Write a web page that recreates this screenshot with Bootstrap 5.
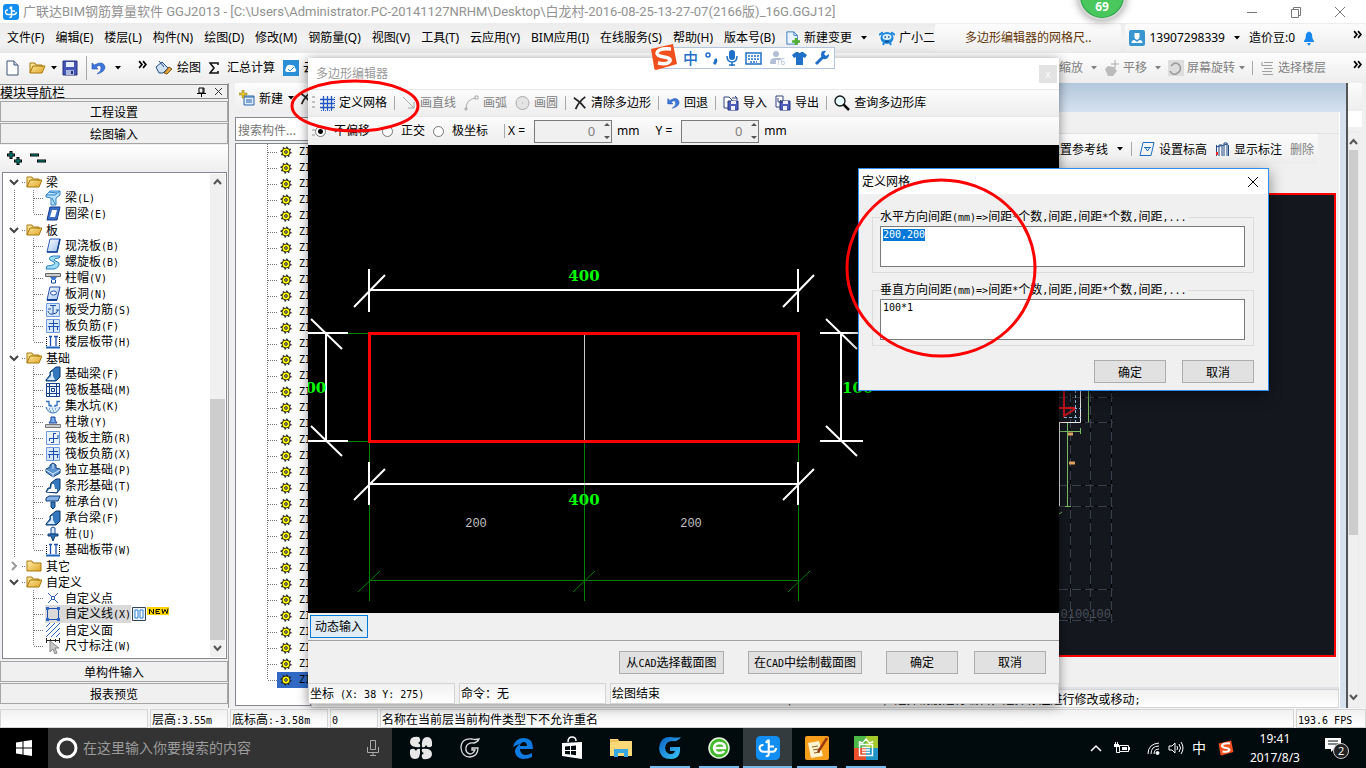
<!DOCTYPE html>
<html lang="zh-CN">
<head>
<meta charset="utf-8">
<meta name="viewport" content="width=device-width, initial-scale=1">
<title>广联达BIM钢筋算量软件 GGJ2013</title>
<link href="https://cdn.jsdelivr.net/npm/bootstrap@5.3.0/dist/css/bootstrap.min.css" rel="stylesheet">
<style>
:root{--ui:"Noto Sans","Noto Sans CJK SC",sans-serif;--song:"Noto Sans CJK SC",sans-serif;--face:#f0f0f0}
body{font-family:var(--ui);font-size:12px;line-height:16px;color:#000;background:var(--face);overflow:hidden}
button,input,textarea{font-family:inherit;font-size:12px;color:inherit}
svg{display:block;flex-shrink:0}
.shell{height:100vh}
.song{font-family:var(--song)}
.hw{font-family:"DejaVu Sans Mono",monospace;font-size:10px}
.plain{border:0;background:none;padding:0;color:inherit;white-space:nowrap;text-decoration:none}
.nowrap{white-space:nowrap}
.title-row{height:23px;background:#fff;color:#929292;padding-left:3px}
.app-name{font-family:Roboto,"Noto Sans CJK SC",sans-serif;font-size:13px}
.menu-row{height:30px;background:linear-gradient(#ececec,#f3f3f3 60%,#e8e8e8)}
.menu-row nav{gap:11px;padding-left:7px}
a.news.plain{color:#633405;padding:0 30px;line-height:28px;border-radius:3px}
.account{border-radius:3px;height:28px}
.soft,a.news.plain{background:linear-gradient(#fcfcfc,#ededed)}
.tool-row{height:30px;background:linear-gradient(#fdfdfd,#ededed)}
.tb{display:flex;align-items:center;gap:4px;padding:0 4px}
.tight .tb{gap:3px;padding:0 3px}
.sep{width:1px;height:14px;background:#a8a8a8;margin:0 3px;flex-shrink:0}
.sep.tall{height:24px}
.grip{width:3px;height:14px;background:repeating-linear-gradient(#c0c0c0 0 2px,transparent 2px 5px);flex-shrink:0}
.muted{color:#808080}
/* left navigator */
.navigator{width:229px;flex-shrink:0;border-right:1px solid #9a9a9a;padding:1px 0 3px}
.nav-head{height:15px;border:1px solid #888;border-left:0;font-size:13px;margin-bottom:2px}
.bar-btn{height:21px;border:1px solid #a6a6a6;background:var(--face);line-height:18px;padding:0;width:100%;margin-bottom:1px}
.pm-row{height:26px;background:linear-gradient(#fff,#eee);padding-left:7px}
.tree-box{border:1px solid #828790;margin:1px 1px 2px 2px;background:#fff;padding:1px}
.tree-row{height:16px}
.tree-row .pick{background:#d9d9d9}
.tree-row svg.ic{width:16px;height:16px}
.vscroll{width:15px;background:var(--face)}
.thumb{background:#cdcdcd}
/* component list */
.parts{width:76px;flex-shrink:0;margin-left:6px}
.find{height:24px;width:100%;border:1px solid #828790;padding:0 2px;background:#fff;color:#777;border-radius:0;margin:4px 0 2px}
.part-box{border:1px solid #828790;background:#fff;overflow:hidden;margin-bottom:2px}
.part-row{height:16px;padding-left:31px}
.part-row.on .pad{background:#316ac5}
.pad{gap:7px;padding-left:3px}
/* model area */
.mdi{background:linear-gradient(#b3c7dc,#d6e2f0 29px,#d6e2f0);padding:29px 6px 0 0}
.mdi-in{background:var(--face);border-right:1px solid #fff}
.mdi-head{height:22px}
.mdi-tools{height:30px;width:fit-content;margin-left:auto;margin-right:21px}
.mdi-gap{height:29px}
.mdi-foot{height:32px}
.mdi-status{height:19px}
.model{background:#14171e;border:2px solid #f00;margin-right:3px}
.rail{width:20px;flex-shrink:0;border-left:2px solid #555;padding-right:4px}
/* status */
.status{height:20px;background:#f6f6f6;gap:2px;padding-top:1px}
.cell{border:1px solid #d4d4d4;background:linear-gradient(#f1f1f1,#fff);padding:0 1px;line-height:17px;white-space:nowrap;overflow:hidden}
.mdi-status.cell{padding-left:474px}
.w-a{width:148px}.w-b{width:78px}.w-c{width:98px}.w-d{width:48px}.w-e{width:70px}
/* task bar */
.taskbar{height:40px;background:#010a0d;color:#fff}
.start{width:48px;background:#000}
.search{width:344px;background:#333;color:#9a9a9a;gap:5px;padding:0 12px 0 8px}
.search input{background:none;border:0;outline:0;font-size:14px;padding:0;color:#aaa}
.search input::placeholder{color:#9b9b9b}
.task{width:49px;border:0;background:none;padding:0;display:flex;align-items:center;justify-content:center}
.task.run{background:linear-gradient(#76b9ed,#76b9ed) center bottom/40px 2px no-repeat}
.task.now{background:#333b3e;box-shadow:inset 0 -2px #76b9ed}
.ime-mode{font-size:14px}
.clock{line-height:19px}
/* floating windows */
.editor{position:absolute;left:308px;right:307px;top:58px;bottom:64px;background:var(--face);box-shadow:0 2px 10px rgba(0,0,0,.45)}
.ed-title{height:31px;background:#fff;color:#999;padding:0 2px 0 8px}
.ed-close{width:18px;height:18px;background:#e3e3e3;color:#fff;font-size:10px}
.ed-t1{height:27px;border-top:1px solid #e8e8e8;padding-left:4px}
.ed-t2{height:29px;border-top:1px solid #e8e8e8;padding-left:4px}
.ed-t2 input[type=radio]{appearance:none;width:11px;height:11px;border:1px solid #777;border-radius:50%;margin:0 8px 0 0;background:#fff}
.ed-t2 input[type=radio]:checked{background:radial-gradient(#000 0 2px,#fff 3px)}
.spin{width:78px;height:23px;border:1px solid #7a7a7a;background:var(--face);margin:0 5px 0 9px}
.spin input{width:60px;border:0;background:none;text-align:right;color:#808080;padding:0;font-size:13px}
.board{background:#000;overflow:hidden}
.big-num{font-family:"DejaVu Serif",serif;font-size:15px;font-weight:700}
.thin-num{font-family:"Liberation Mono",monospace;font-size:12px}
.dyn-row{height:28px;padding-left:2px;border-bottom:1px solid #a0a0a0}
.dyn{height:23px;border:1px solid #0078d7;background:#e0ecf6;padding:0 4px}
.act-row{height:42px;padding-right:13px}
.act{height:23px;border:1px solid #adadad;background:#e1e1e1;padding:0 5px;line-height:20px;white-space:nowrap;min-width:105px}
.act.std{width:72px;min-width:0}
.ed-status{height:21px}
.w-pos{width:147px}
.dlg{position:absolute;right:97px;top:168px;width:411px;background:var(--face);border:1px solid #2e8ef0;box-shadow:0 4px 14px rgba(0,0,0,.45)}
.dlg-title{height:25px;background:#fff;padding:0 9px 0 3px}
.dlg-body{padding:16px 14px 7px 13px}
.dlg fieldset{border:1px solid #dcdcdc;padding:2px 8px 5px 7px;margin-bottom:10px}
.dlg legend{float:none;width:auto;margin:0;padding:0 2px 0 0;font-size:12px;line-height:12px}
.dlg textarea{display:block;width:100%;height:41px;border:1px solid #7a7a7a;border-radius:0;resize:none;padding:2px;outline:0;background:#fff;font-family:"DejaVu Sans Mono",monospace;font-size:10px;line-height:12px}
.dlg textarea::selection{background:#0078d7;color:#fff}
.ring{position:absolute;pointer-events:none}
.ring-a{left:288px;top:78px}
.ring-b{left:-15px;top:9px}
.ime{position:absolute;left:650px;top:43px}
.ime-bar{margin:4px 0 0 10px;height:22px;width:175px;border:1px solid #b4c6dc;background:#fff;padding:0 4px 0 22px;color:#1e70c8;gap:5px}
.ime-bar b{font-size:15px;font-weight:500}
.ime-s{position:absolute;left:0;top:0}
.ball{position:absolute;right:240px;top:-28px;width:48px;height:48px;border-radius:50%;background:#49c75c;border:2px solid #d6d6d6;box-shadow:0 1px 8px rgba(0,0,0,.4),inset 0 0 0 1px #279a48;color:#fff;font-weight:700;font-size:12px;padding-top:25px;text-align:center}
</style>
</head>
<body>
<svg width="0" height="0" class="position-absolute" aria-hidden="true">
<defs>
<linearGradient id="gy" x2="1" y2="1"><stop stop-color="#fff0a8"/><stop offset="1" stop-color="#e0a528"/></linearGradient>
<linearGradient id="gb" x2="1" y2="1"><stop stop-color="#fff"/><stop offset="1" stop-color="#9cc0ee"/></linearGradient>
<linearGradient id="gg" x2="1" y2="1"><stop stop-color="#0a5fc4"/><stop offset="1" stop-color="#3cc8f8"/></linearGradient>
<symbol id="i-app" viewBox="0 0 16 16"><rect width="16" height="16" rx="3" fill="#128ef2"/><path d="M8.500 2.500V12q0 1.500-2 1.500M6.500 4.500l2-2M5 6Q2 6 2.500 8.500 3 10.500 5 10.500h6q2 0 2.500-2.500M8.500 7h3.500" fill="none" stroke="#fff" stroke-width="1.400"/></symbol>
<symbol id="i-folder" viewBox="0 0 16 16"><path d="M1 13V3h5l1 2h6v2M1 13l3-7h12l-3 7z" fill="url(#gy)" stroke="#a8790c"/></symbol>
<symbol id="i-folderc" viewBox="0 0 16 16"><path d="M1 13V3h5l1 2h8v8z" fill="url(#gy)" stroke="#a8790c"/></symbol>
<symbol id="i-beam" viewBox="0 0 16 16"><path d="M1 5l4-4h10v4l-4 3v7H6V8L1 7z" fill="#b9e0fb" stroke="#2f83c8"/><path d="M1 5h9l5-4M4 2l8 1M7 8l3 6" stroke="#2f83c8" fill="none"/></symbol>
<symbol id="i-slab" viewBox="0 0 16 16"><path d="M5 1h10l-3 13H2z" fill="url(#gb)" stroke="#2b5dbb"/><path d="M2 14h10l3-13" stroke="#164094" stroke-width="1.500" fill="none"/></symbol>
<symbol id="i-ringbeam" viewBox="0 0 16 16"><path d="M5 1h10l-3 13H2z" fill="#3b6ec8" stroke="#123b90"/><path d="M7 4h5l-2 7H5z" fill="#fff"/></symbol>
<symbol id="i-spiral" viewBox="0 0 16 16"><path d="M15 2H8Q3 3 5 6l4 2q3 3-7 4l-1 3h8q6-2 5-6L9 6q0-2 5-2z" fill="#9edcf8" stroke="#2381c0"/></symbol>
<symbol id="i-cap" viewBox="0 0 16 16"><path d="M.5 3.500h15v3H.5z" fill="#ccc" stroke="#666"/><path d="M5 7h7l-2 3H7z" fill="#3974d8"/><path d="M6.500 10v3h4v-3" fill="none" stroke="#1a49a0"/></symbol>
<symbol id="i-hole" viewBox="0 0 16 16"><path d="M5 1h10l-3 13H2z" fill="url(#gb)" stroke="#1e4ca8"/><ellipse cx="8.500" cy="7" rx="3" ry="2" fill="#fff" stroke="#1e4ca8"/><path d="M2 14h10" stroke="#164094" stroke-width="2"/></symbol>
<symbol id="i-rebar" viewBox="0 0 16 16"><path d="M1.500 1.500h13v13h-13z" fill="#d8e8fb" stroke="#6f9be0"/><path d="M8 3v9M5 3.500h6M3 7h3M3 9q1 4 5 3 4 0 5-4M11 8h3" fill="none" stroke="#1c4fae"/></symbol>
<symbol id="i-rebar2" viewBox="0 0 16 16"><path d="M1.500 1.500h13v13h-13z" fill="#d8e8fb" stroke="#6f9be0"/><path d="M8.500 2v12M3 8.500h11M4 5.500h9M4.500 8v4M12.500 8v4" fill="none" stroke="#1c4fae"/></symbol>
<symbol id="i-strip" viewBox="0 0 16 16"><path d="M1 13.500h14" stroke="#1c63c0" stroke-width="2"/><path d="M4 2.500h3M9 2.500h4M5.500 3v9M11 3v9" stroke="#1c4fae" stroke-width="1.300"/><path d="M1.500 3v9M14.500 3v9" stroke="#111" stroke-dasharray="1 1"/></symbol>
<symbol id="i-fbeam" viewBox="0 0 16 16"><path d="M1 14l4-5V6l6-5h4v10l-4 4H1z" fill="#3378bd" stroke="#0b3566"/><path d="M2 14l4-4V6h2v4l2 4z" fill="#d5e9fa"/></symbol>
<symbol id="i-raft" viewBox="0 0 16 16"><path d="M1.500 1.500h13v13h-13z" fill="#eef5ff" stroke="#133f8c"/><path d="M4.500 2v12M11.500 2v12M2 4.500h12M2 11.500h12M6.500 6.500h3v3h-3z" stroke="#133f8c" fill="none"/></symbol>
<symbol id="i-pit" viewBox="0 0 16 16"><path d="M1 3.500h3v4h2v2h4v-2h2v-4h3" fill="none" stroke="#2f6fc0" stroke-width="1.300"/><path d="M1 9q2 6 7 6t7-6" fill="#dcebfb" stroke="#2f6fc0"/><path d="M4 11h9M5 13h6" stroke="#2f6fc0" stroke-dasharray="1 2"/></symbol>
<symbol id="i-pier" viewBox="0 0 16 16"><path d="M6 3h4v3l2 3H4l2-3z" fill="#79aaf0" stroke="#174396"/><path d="M.5 10.500h15v3H.5z" fill="#ccc" stroke="#777"/></symbol>
<symbol id="i-rc" viewBox="0 0 16 16"><path d="M1.500 1.500h13v13h-13z" fill="#e9f1fd" stroke="#6f9be0"/><path d="M8.500 3v10M4 8.500h9V5M4.500 8v3M8 3.500h3M6 12.500h3" fill="none" stroke="#1c4fae"/></symbol>
<symbol id="i-iso" viewBox="0 0 16 16"><path d="M1 7l4-2V3l3-2 3 2v3l4 1v4l-7 4-7-5z" fill="#5b93cf" stroke="#0f3d76"/><path d="M1 8l7 4 7-4M8 12v3M8 2v5" stroke="#dceaff" fill="none"/></symbol>
<symbol id="i-stripf" viewBox="0 0 16 16"><path d="M1 14l2-4h2l1-5 5-4h4v10l-3 4z" fill="#3378bd" stroke="#0b3566"/><path d="M2 14l2-3h2l1-5h2l1 5h2v3z" fill="#fff"/></symbol>
<symbol id="i-pcap" viewBox="0 0 16 16"><path d="M1 4l3-2h11l-2 5H1z" fill="#84b2e8" stroke="#0f3d76"/><path d="M6 8h4v5l-2 2-2-2z" fill="#3378bd" stroke="#0f3d76"/></symbol>
<symbol id="i-pile" viewBox="0 0 16 16"><path d="M6 2q2-2 4 0v6H6z" fill="#dbe9fa" stroke="#174b90"/><path d="M3 8h10v2H10l-2 5-2-5H3z" fill="#2f6fb8" stroke="#0f3d76"/></symbol>
<symbol id="i-pt" viewBox="0 0 16 16"><path d="M3 3l10 10M13 3L3 13" stroke="#2d5fb0"/><path d="M6.500 6.500h3v3h-3z" fill="#fff" stroke="#2d5fb0"/></symbol>
<symbol id="i-line" viewBox="0 0 16 16"><path d="M2.500 2.500h11v11h-11z" fill="none" stroke="#1c4fae"/><path d="M1 1h3v3H1zM12 1h3v3h-3zM1 12h3v3H1zM12 12h3v3h-3z" fill="#2d68c8"/></symbol>
<symbol id="i-hatch" viewBox="0 0 16 16"><path d="M1 5l4-4M1 10l9-9M1 15L15 1M6 15l9-9M11 15l4-4" stroke="#2d68c8"/></symbol>
<symbol id="i-dim" viewBox="0 0 16 16"><path d="M1.500 0v5M14.500 0v5M1 2.500h14M5.500 1v3M10.500 1v3" stroke="#222"/><path d="M5 3v11l3-3 2 5 2-1-2-5h4z" fill="#c9c9c9" stroke="#888"/></symbol>
<symbol id="i-gear" viewBox="0 0 12 12"><circle cx="6" cy="6" r="4" fill="#ff0" stroke="#111" stroke-width=".8"/><circle cx="6" cy="6" r="4.800" fill="none" stroke="#222" stroke-width="1.400" stroke-dasharray="1.700 2"/><circle cx="6" cy="6" r="1.300" fill="#fff" stroke="#111"/></symbol>
<symbol id="i-down" viewBox="0 0 8 8"><path d="M1 2h6L4 5.500z" fill="currentColor"/></symbol>
<symbol id="i-more" viewBox="0 0 8 8"><path d="M1 1l2.500 3L1 7M4.500 1L7 4 4.500 7" fill="none" stroke="#000" stroke-width="1.500"/></symbol>
<symbol id="i-undo" viewBox="0 0 16 16"><path d="M2 3v6h6L6 7q4-3 5 0 1 4-4 7 8-2 8-7Q13 0 4.500 5z" fill="#3d77dd" stroke="#1e50a8" stroke-width=".6"/></symbol>
<symbol id="i-doc" viewBox="0 0 16 16"><path d="M3 1h7l4 4v10H3z" fill="#fff" stroke="#3c5578"/><path d="M10 1v4h4" fill="#c8dcf4" stroke="#3c5578"/></symbol>
<symbol id="i-docplus" viewBox="0 0 16 16"><path d="M1 1h8l4 4v10H1z" fill="#eaf4ff" stroke="#2b71b8"/><path d="M9 1v4h4" fill="none" stroke="#2b71b8"/><path d="M10 8h3v2.500h3v3h-3V16h-3v-2.500H7v-3h3z" fill="#4fae2e"/></symbol>
<symbol id="i-save" viewBox="0 0 16 16"><path d="M1 1h14v14H1z" fill="#4556b8" stroke="#26307c"/><path d="M4 2h8v5H4z" fill="#e8eefc"/><path d="M4 10h8v5H4z" fill="#aab6da"/><path d="M9 11h2v3H9z" fill="#26307c"/></symbol>
<symbol id="i-x" viewBox="0 0 16 16"><path d="M1 2q8 5 13 12M14 1Q6 7 3 15" fill="none" stroke="#222" stroke-width="2"/></symbol>
<symbol id="i-grid" viewBox="0 0 16 16"><path d="M4.500 1v14M8.500 1v14M12.500 1v14M1 4.500h14M1 8.500h14M1 12.500h14" stroke="#1f56c4" stroke-width="1.300"/><path d="M15.500 2v12M2 15.500h12" stroke="#2762c8" stroke-dasharray="1 1"/></symbol>
<symbol id="i-io" viewBox="0 0 16 16"><path d="M1 2h5l3 3v8H1z" fill="#fff" stroke="#31437a"/><path d="M5 6h10v9H5z" fill="#4c5dbd" stroke="#26307c"/><path d="M8 6h5v3H8zM8 11h4v4H8z" fill="#eef"/><path d="M9 3h5l-2-2M14 3v2" stroke="#31437a" fill="none"/></symbol>
<symbol id="i-out" viewBox="0 0 16 16"><path d="M1 1h7v11H1z" fill="#fff" stroke="#31437a"/><path d="M5 6h10v9H5z" fill="#4c5dbd" stroke="#26307c"/><path d="M8 6h5v3H8zM8 11h4v4H8z" fill="#eef"/><path d="M3 3v4h4L5 5M7 7L5 9" stroke="#31437a" fill="none"/></symbol>
<symbol id="i-mag" viewBox="0 0 16 16"><circle cx="6" cy="6" r="5" fill="#e8fbff" stroke="#111" stroke-width="1.300"/><path d="M9.500 9.500L15 15" stroke="#111" stroke-width="2.500"/></symbol>
<symbol id="i-g" viewBox="0 0 24 24"><path d="M23 1Q20 6 14 5 8 5 7 12q1 6 6 6 3 0 4-3h-5v-4h10q1 12-9 12Q2 23 1 13 2 0 13 1q6 1 10 0z" fill="url(#gg)"/></symbol>
<symbol id="i-s" viewBox="0 0 28 28"><path d="M1 6L23 1l4 20-21 6q-2 0-2-3z" fill="#f0501e"/><path d="M21 6Q8 5 7 10q0 3 7 4t6 4q-2 4-12 2" fill="none" stroke="#fff" stroke-width="3.500"/></symbol>
</defs>
</svg>

<div class="shell d-flex flex-column position-relative">
  <header>
    <div class="title-row d-flex align-items-center">
      <svg width="16" height="16"><use href="#i-app"/></svg>
      <span class="nowrap ms-1 app-name">广联达BIM钢筋算量软件 GGJ2013 - [C:\Users\Administrator.PC-20141127NRHM\Desktop\白龙村-2016-08-25-13-27-07(2166版)_16G.GGJ12]</span>
      <div class="ms-auto d-flex gap-4 pe-3 me-1">
        <button class="plain me-2" aria-label="最小化"><svg width="12" height="12"><path d="M1 6.500h10" stroke="#777"/></svg></button>
        <button class="plain me-2" aria-label="还原"><svg width="12" height="12" fill="none" stroke="#777"><path d="M1.500 3.500h7v8h-7zM3.500 3V1.500h7v8H9"/></svg></button>
        <button class="plain" aria-label="关闭"><svg width="12" height="12" stroke="#777"><path d="M1 1l10 10M11 1L1 11"/></svg></button>
      </div>
    </div>
    <div class="menu-row d-flex align-items-center">
      <nav class="d-flex align-items-center">
        <a class="plain" href="#">文件(F)</a><a class="plain" href="#">编辑(E)</a><a class="plain" href="#">楼层(L)</a><a class="plain" href="#">构件(N)</a><a class="plain" href="#">绘图(D)</a><a class="plain" href="#">修改(M)</a><a class="plain" href="#">钢筋量(Q)</a><a class="plain" href="#">视图(V)</a><a class="plain" href="#">工具(T)</a><a class="plain" href="#">云应用(Y)</a><a class="plain" href="#">BIM应用(I)</a><a class="plain" href="#">在线服务(S)</a><a class="plain" href="#">帮助(H)</a><a class="plain" href="#">版本号(B)</a>
        <button class="plain d-flex align-items-center gap-1"><svg width="14" height="16"><use href="#i-docplus"/></svg>新建变更<svg class="ms-1" width="8" height="8"><use href="#i-down"/></svg></button>
        <button class="plain d-flex align-items-center gap-1"><svg width="16" height="16"><ellipse cx="8" cy="8" rx="6.500" ry="6" fill="#1c86dc"/><path d="M0 5l3-2 2 3M16 5l-3-2-2 3M5 13l-1 2M11 13l1 2" stroke="#1c86dc" stroke-width="2" fill="none"/><ellipse cx="8" cy="7" rx="4.500" ry="3" fill="#d8efff"/><path d="M5.500 7h1.500M9 7h1.500M6 11.500h4" stroke="#124a86" stroke-width="1.500"/></svg>广小二</button>
      </nav>
      <a class="plain news" href="#">多边形编辑器的网格尺..</a>
      <div class="account soft d-flex align-items-center flex-fill ms-1">
        <button class="plain tb"><svg width="16" height="16"><rect width="16" height="16" rx="2" fill="#3796cf"/><path d="M5.500 3h5v4q0 2-2.500 3-2.500-1-2.500-3z" fill="#fff"/><path d="M2.500 13q0-3 3-3l2.500 2 2.500-2q3 0 3 3z" fill="#fff"/></svg>13907298339<svg class="ms-1" width="8" height="8"><use href="#i-down"/></svg></button>
        <button class="plain tb">造价豆:0<svg class="ms-1" width="12" height="16"><path d="M1 11q2-2 2-7 3-5 6 0 0 5 2 7v1H1z" fill="#1887ee"/><path d="M4 13h4l-2 3z" fill="#1887ee"/></svg></button>
        <button class="plain ms-auto me-1" aria-label="更多"><svg class="mb-2" width="9" height="9"><use href="#i-more"/></svg></button>
      </div>
    </div>
    <div class="tool-row d-flex align-items-center">
      <button class="plain ms-1" aria-label="新建"><svg width="16" height="16"><use href="#i-doc"/></svg></button>
      <button class="plain d-flex align-items-center gap-1 ms-2" aria-label="打开"><svg width="18" height="16"><use href="#i-folder"/></svg><svg width="8" height="8"><use href="#i-down"/></svg></button>
      <button class="plain ms-1" aria-label="保存"><svg width="16" height="16"><use href="#i-save"/></svg></button>
      <span class="sep tall ms-2"></span>
      <button class="plain d-flex align-items-center gap-1" aria-label="撤销"><svg width="16" height="16"><use href="#i-undo"/></svg><svg class="ms-1" width="8" height="8"><use href="#i-down"/></svg></button>
      <button class="plain ms-3 me-1" aria-label="更多"><svg class="mb-2" width="9" height="9"><use href="#i-more"/></svg></button>
      <button class="plain tb"><svg width="18" height="16"><path d="M1 7l6-5 6 6-5 5H4z" fill="#cfe0f5" stroke="#234d84"/><path d="M4 1l5 6" stroke="#234d84"/><path d="M9 13l5-6 3 2-5 5z" fill="#e3a43a" stroke="#7b551a"/></svg>绘图</button>
      <button class="plain tb"><svg class="me-1" width="10" height="12"><path d="M9 3V1H1l4 5-4 5h8V9" fill="none" stroke="#111" stroke-width="1.600"/></svg>汇总计算</button>
      <button class="plain tb"><svg width="16" height="16"><rect width="16" height="16" fill="#2b8fd8"/><path d="M4 12q-3-1-1-4 1-4 5-3 4 0 4 3 3 3-1 4z" fill="#fff"/><path d="M5 9l2 2 4-4" stroke="#2b8fd8" fill="none"/></svg>云检查</button>
      <div class="tight ms-auto d-flex align-items-center muted">
        <button class="plain tb">缩放<svg class="ms-1" width="8" height="8"><use href="#i-down"/></svg></button>
        <button class="plain tb"><svg width="16" height="16"><path d="M1 9l3-3 6 1 3 4-4 5H4z" fill="#bbb"/><path d="M11 0v8M7 4h8" stroke="#aaa"/></svg>平移<svg class="ms-1" width="8" height="8"><use href="#i-down"/></svg></button>
        <button class="plain tb"><svg width="16" height="16"><path d="M0 0h16v16H0z" fill="#ddd"/><path d="M3 6q5-6 9 0 2 5-4 8M2 11q2 4 6 3" fill="none" stroke="#999" stroke-width="1.500"/></svg>屏幕旋转<svg width="8" height="8"><use href="#i-down"/></svg></button>
        <span class="sep"></span>
        <button class="plain tb"><svg width="16" height="16"><path d="M5 2.500h9M3 5.500h10M5 8.500h9M3 11.500h10M4 14.500h10M3 2v4" fill="none" stroke="#a0a0a0"/></svg>选择楼层</button>
        <button class="plain ms-4 me-1" aria-label="更多"><svg class="mb-2" width="9" height="9"><use href="#i-more"/></svg></button>
      </div>
    </div>
  </header>

  <main class="d-flex flex-fill overflow-hidden song">
    <aside class="navigator d-flex flex-column">
      <div class="nav-head d-flex align-items-center flex-shrink-0"><span class="nowrap">模块导航栏</span>
        <svg class="ms-auto me-2" width="9" height="10"><path d="M2 1h5v5H2zM0 6.500h9M4.500 7v3M6 1v5" fill="none" stroke="#000"/></svg>
        <svg class="me-1" width="9" height="9" stroke="#333"><path d="M1 1l7 7M8 1L1 8"/></svg></div>
      <button class="bar-btn flex-shrink-0">工程设置</button>
      <button class="bar-btn flex-shrink-0">绘图输入</button>
      <div class="pm-row d-flex align-items-center flex-shrink-0"><svg width="40" height="16"><path d="M4 1v8M0 5h8M11 7v8M7 11h8M23 5h9M30 11h9" stroke="#000" stroke-width="3"/><path d="M4 2v6M1 5h6M11 8v6M8 11h6M24 5h7M31 11h7" stroke="#009c90"/></svg></div>
      <div class="tree-box flex-fill d-flex overflow-hidden">
        <div class="flex-fill" id="tree"></div>
        <div class="vscroll d-flex flex-column">
          <svg width="15" height="18" fill="none" stroke="#555" stroke-width="2"><path d="M4 10l3.500-4L11 10"/></svg>
          <div class="flex-fill"></div><div class="thumb" style="height:50%"></div>
          <svg width="15" height="17" fill="none" stroke="#555" stroke-width="2"><path d="M4 6l3.500 4L11 6"/></svg>
        </div>
      </div>
      <button class="bar-btn flex-shrink-0">单构件输入</button>
      <button class="bar-btn flex-shrink-0">报表预览</button>
    </aside>

    <section class="parts d-flex flex-column">
      <div class="tool-row d-flex align-items-center flex-shrink-0"><button class="plain tb"><svg width="16" height="16"><path d="M5 6h10v9H5z" fill="#dcebfb" stroke="#2c64a8"/><path d="M5 7h10M7 10h6M7 12h6" stroke="#2c64a8"/><path d="M3 0h2v3h3v2H5v3H3V5H0V3h3z" fill="#e9c62b" stroke="#8b7310" stroke-width=".5"/></svg>新建<svg width="8" height="8"><use href="#i-down"/></svg></button><svg width="14" height="14"><use href="#i-x"/></svg></div>
      <input class="find flex-shrink-0" type="text" placeholder="搜索构件..." aria-label="搜索构件">
      <div class="part-box flex-fill" id="parts"></div>
    </section>

    <section class="mdi flex-fill d-flex overflow-hidden">
      <div class="mdi-in flex-fill d-flex flex-column">
        <div class="mdi-head border-bottom flex-shrink-0"></div>
        <div class="mdi-tools soft d-flex align-items-center flex-shrink-0">
          <button class="plain tb">设置参考线<svg class="ms-1" width="8" height="8"><use href="#i-down"/></svg></button><span class="sep"></span>
          <button class="plain tb"><svg width="16" height="16" fill="none" stroke="#1c6fc0"><path d="M4 1.500h11l-3 13H1zM5 6.500h7M6.500 7l2 3 2-3"/></svg>设置标高</button>
          <button class="plain tb"><svg width="15" height="16" fill="none" stroke="#234d84"><path d="M1.500 4v11M13.500 4v11M4 15V4h3v11M9 15V2h3v13M1 6l12-3"/><path d="M2 11v3" stroke="#e22" stroke-width="2"/></svg>显示标注</button>
          <button class="plain tb muted">删除</button>
        </div>
        <div class="mdi-gap flex-shrink-0"></div>
        <div class="model flex-fill d-flex justify-content-end overflow-hidden">
          <svg width="275" height="458" viewBox="1059 195 275 458" fill="none">
            <path d="M1059 397.500h54M1059 422.500h54M1059 485.500h54M1059 506.500h54M1059 589.500h54M1059 620.500h54M1070.500 380v243M1090.500 380v243M1111.500 380v243" stroke="#000"/>
            <path d="M1059 397.500h54M1059 422.500h54M1059 485.500h54M1059 506.500h54M1059 589.500h54M1059 620.500h54M1070.500 380v243M1090.500 380v243M1111.500 380v243" stroke="#39404b" stroke-dasharray="9 4"/>
            <path d="M1088.500 380v42M1067.500 422v84M1059 431.500h22M1080.500 428v6M1065 506.500h6M1059 514l3-2" stroke="#78bd5e"/>
            <path d="M1059.500 422v84M1059 422.500h21.500V380" stroke="#e8e8e8"/>
            <path d="M1075.500 390v32M1064 408.500h17M1064 417.500h17" stroke="#90b8df" stroke-dasharray="3 2"/>
            <path d="M1064 380v36l11-7M1059 408h16" stroke="#c8141c" stroke-width="2"/>
            <path d="M1068 434h5M1069 463h6" stroke="#d9a25f" stroke-width="3"/>
            <text class="thin-num" x="1111" y="618" text-anchor="end" fill="#4a505a">0100100</text>
          </svg>
        </div>
        <div class="mdi-foot flex-shrink-0 border-bottom border-2"></div>
        <div class="mdi-status cell flex-shrink-0">(X: 7054 Y: 1183) 选择钢筋进行编辑，选择标注进行修改或移动;</div>
      </div>
    </section>
    <aside class="rail d-flex flex-column">
      <div class="soft pt-4 pb-1"></div><div class="bg-white mb-1 py-2"></div>
      <div class="vscroll flex-fill d-flex flex-column border border-secondary-subtle w-75">
        <svg width="10" height="18" fill="none" stroke="#555" stroke-width="2"><path d="M1 12l3.500-4L8 12"/></svg>
        <div class="thumb" style="height:67%"></div><div class="flex-fill"></div>
        <svg width="10" height="18" fill="none" stroke="#555" stroke-width="2"><path d="M1 6l3.500 4L8 6"/></svg>
      </div>
    </aside>
  </main>

  <footer>
    <div class="status d-flex song">
      <div class="cell w-a"></div><div class="cell w-b">层高:3.55m</div><div class="cell w-c">底标高:-3.58m</div><div class="cell w-d">0</div><div class="cell flex-fill">名称在当前层当前构件类型下不允许重名</div><div class="cell w-e">193.6 FPS</div>
    </div>
    <div class="taskbar d-flex">
      <button class="plain start d-flex align-items-center justify-content-center" aria-label="开始"><svg width="16" height="16" fill="#fff"><path d="M0 2.500l6.500-1V7.500H0zM7.500 1.300L16 0v7.500H7.500zM0 8.500h6.500v6L0 13.500zM7.500 8.500H16V16l-8.500-1.300z"/></svg></button>
      <div class="search d-flex align-items-center"><svg width="22" height="22"><circle cx="11" cy="11" r="9" fill="none" stroke="#fff" stroke-width="3"/></svg><input class="flex-fill" type="text" placeholder="在这里输入你要搜索的内容" aria-label="搜索"><svg width="14" height="18" fill="none" stroke="#aaa"><path d="M4.500 1.500h5v9h-5zM1.500 8v5.500h11V8M7 14v3M4 16.500h6"/></svg></div>
      <div class="d-flex ms-1">
        <button class="task" aria-label="花瓣"><svg width="24" height="24" viewBox="0 0 24 24" fill="#e8e8e8"><path d="M11 11Q1 12 1 6t9-5q3 4-1 6 3 1 2 4zM13 11q-1-10 5-10t5 9q-4 3-6-1-1 3-4 2zM13 13q10-1 10 5t-9 5q-3-4 1-6-3-1-2-4zM11 13q1 10-5 10T1 14q4-3 6 1 1-3 4-2z"/></svg></button>
        <button class="task" aria-label="G"><svg width="22" height="22" viewBox="0 0 22 22" fill="none" stroke="#ddd" stroke-width="1.300"><path d="M20 2q-4 1-7 0Q2 1 2 11q1 9 9 9 8-1 8-9h-6v2h3q-2 4-5 4-5-1-4-7 2-5 8-4 4-1 5-4z"/></svg></button>
        <button class="task ms-1" aria-label="Edge"><svg width="22" height="22" viewBox="0 0 22 22"><path d="M1 10Q3 1 12 1q9 0 9 11H8q0 5 5 6 4 0 7-2v4q-4 2-9 2-7-1-8-7 0-5 5-8-4 1-7 3zM8 9h7q0-4-4-4-3 1-3 4z" fill="#0f7be0" fill-rule="evenodd"/></svg></button>
        <button class="task" aria-label="商店"><svg width="22" height="24" viewBox="0 0 22 24"><path d="M1 7l20-1v17L1 20z" fill="#fff"/><path d="M7 6q0-5 4-5t4 4" fill="none" stroke="#fff" stroke-width="1.500"/><path d="M4 10.500l5-.500V14H4zM10 9.900l5-.4V14h-5zM4 15h5v3.500L4 18zM10 15h5v4.200l-5-.600z" fill="#010a0d"/></svg></button>
        <button class="task" aria-label="文件资源管理器"><svg width="22" height="20" viewBox="0 0 22 20"><path d="M0 1h8l1 2h13v15H0z" fill="#fbd978"/><path d="M0 3h8" stroke="#e5a93a"/><path d="M4 19v-8h14v8h-4v-4H8v4z" fill="#39a7e2"/></svg></button>
        <button class="task run" aria-label="广联达"><svg width="24" height="24"><use href="#i-g"/></svg></button>
        <button class="task run" aria-label="浏览器"><svg width="24" height="24" viewBox="0 0 24 24"><circle cx="12" cy="12" r="10" fill="#43b92b" stroke="#e6f8df" stroke-width="1.500"/><path d="M6 12h12q0-5-6-5-5 1-5 5 1 5 5 5 4 0 5-2" fill="none" stroke="#fff" stroke-width="2.500"/></svg></button>
        <button class="task now" aria-label="GGJ2013"><svg width="24" height="24"><use href="#i-app"/></svg></button>
        <button class="task run" aria-label="记事"><svg width="24" height="24" viewBox="0 0 24 24"><rect width="24" height="24" rx="2" fill="#f79f1c"/><path d="M3 7l11-2 4 15-12 2z" fill="#fff4cf"/><path d="M7 11l6-1M8 14l6-1M9 17l6-1" stroke="#8b5b20"/><path d="M22 2l-9 14" stroke="#9a3a12" stroke-width="2.500"/></svg></button>
        <button class="task run" aria-label="计价"><svg width="24" height="24" viewBox="0 0 24 24"><path d="M0 0h12v12H0z" fill="#4bb848"/><path d="M12 0h12v12H12z" fill="#a4c92c"/><path d="M0 12h12v12H0z" fill="#e8502d"/><path d="M12 12h12v12H12z" fill="#2195c9"/><path d="M5.500 8.500h13v11h-13zM5.500 5v3M5.500 6l3 1 3.500-4 3.500 4 3-1V5M8 11.500h8M8 14h8M8 16.500h8" fill="none" stroke="#fff" stroke-width="1.400"/></svg></button>
      </div>
      <div class="ms-auto d-flex align-items-center gap-2">
        <svg width="12" height="12" fill="none" stroke="#fff" stroke-width="1.500"><path d="M1 9l5-5 5 5"/></svg>
        <svg class="mx-1" width="16" height="12"><path d="M5.500 3.500h9v6h-9z" fill="none" stroke="#fff"/><path d="M8 5h5v3H8zM0 2h5v3H0zM15 5h1v3h-1z" fill="#fff"/><path d="M1.500 0v2M3.500 0v2M2.500 5v5.500H6" stroke="#fff" fill="none"/></svg>
        <svg class="ms-1" width="14" height="14" fill="none" stroke="#fff"><path d="M2 13Q2 3 13 2M5 13q0-8 8-8M8 13q0-5 5-5"/><circle cx="11.500" cy="12" r="1.500" fill="#fff"/></svg>
        <svg width="16" height="14" fill="none" stroke="#fff"><path d="M1 5h3l3-3v10L4 9H1zM9 5q1 2 0 4M11 3q3 4 0 8M13 1q4 6 0 12"/></svg>
        <span class="ime-mode">中</span>
        <svg class="ms-1" width="16" height="16"><use href="#i-s"/></svg>
        <div class="clock text-center ms-2">19:41<br>2017/8/3</div>
        <svg class="mx-3" width="26" height="24"><path d="M1 2h16v11h-7l-3 3v-3H1z" fill="#fff"/><path d="M4 5h10M4 8h10" stroke="#010a0d"/><circle cx="17" cy="15" r="7.500" fill="#222" stroke="#ccc"/><text x="14" y="19" font-size="11" fill="#fff">2</text></svg>
      </div>
    </div>
  </footer>

  <section class="editor d-flex flex-column" aria-label="多边形编辑器">
    <div class="ed-title d-flex align-items-center justify-content-between flex-shrink-0"><span>多边形编辑器</span><button class="plain ed-close" aria-label="关闭">x</button></div>
    <div class="ed-t1 soft d-flex align-items-center flex-shrink-0">
      <span class="grip"></span>
      <button class="plain tb"><svg width="16" height="16"><use href="#i-grid"/></svg>定义网格</button><span class="sep"></span>
      <button class="plain tb muted"><svg width="14" height="16" stroke="#aaa" fill="none"><path d="M1 2l11 11M6 13h6V7"/></svg>画直线</button>
      <button class="plain tb muted"><svg width="15" height="16" stroke="#aaa" fill="none"><path d="M2 14Q2 4 12 3M11 1h3v3h-3zM1 13h2v2H1z"/></svg>画弧</button>
      <button class="plain tb muted"><svg width="15" height="16" stroke="#aaa" fill="#e4e4e4"><circle cx="7.500" cy="8" r="6.500"/><path d="M7 8h1"/></svg>画圆</button><span class="sep"></span>
      <button class="plain tb"><svg width="14" height="14"><use href="#i-x"/></svg>清除多边形</button><span class="sep"></span>
      <button class="plain tb"><svg width="14" height="14"><use href="#i-undo"/></svg>回退</button><span class="sep"></span>
      <button class="plain tb"><svg width="16" height="16"><use href="#i-io"/></svg>导入</button>
      <button class="plain tb"><svg width="16" height="16"><use href="#i-out"/></svg>导出</button><span class="sep"></span>
      <button class="plain tb"><svg width="16" height="16"><use href="#i-mag"/></svg>查询多边形库</button>
    </div>
    <div class="ed-t2 soft d-flex align-items-center flex-shrink-0">
      <span class="grip"></span>
      <label class="d-flex align-items-center me-2"><input type="radio" name="off" checked>不偏移</label>
      <label class="d-flex align-items-center me-2 ms-1"><input type="radio" name="off">正交</label>
      <label class="d-flex align-items-center me-2"><input type="radio" name="off">极坐标</label>
      <span class="sep ms-2"></span>
      <label for="ox">X =</label>
      <span class="spin d-flex align-items-center"><input id="ox" type="text" value="0"><svg class="ms-2" width="8" height="18" fill="#555"><path d="M1 4l3-3 3 3zM1 14l3 3 3-3z"/></svg></span>mm
      <label for="oy" class="ms-3">Y =</label>
      <span class="spin d-flex align-items-center"><input id="oy" type="text" value="0"><svg class="ms-2" width="8" height="18" fill="#555"><path d="M1 4l3-3 3 3zM1 14l3 3 3-3z"/></svg></span>mm
    </div>
    <div class="board flex-fill d-flex">
      <svg class="flex-shrink-1 w-100 h-100" viewBox="308 145 751 468" fill="none">
        <path d="M348 333.500h22M348 441.500h22M369.500 442v159M584.500 442v159M798.500 442v159M369 580.500h430M358 592l22-21M573 592l22-21M788 592l22-21" stroke="#008000"/>
        <path d="M584.500 334v107" stroke="#c8c8c8"/>
        <path d="M369 290h429M369 269v43M798 269v43M354 307l31-32M783 307l31-32M369 484h429M369 462v43M798 462v43M354 500l31-31M783 500l31-31M326 333v108M300 333h48M300 441h48M311 319l31 30M311 426l31 30M841 333v108M820 333h43M820 441h43M826 319l31 30M826 426l31 30" stroke="#fff" stroke-width="2"/>
        <path d="M369.500 333.500h429v108h-429z" stroke="#f00" stroke-width="3"/>
        <g class="big-num" fill="#0f0"><text x="584" y="281" text-anchor="middle">400</text><text x="584" y="505" text-anchor="middle">400</text><text x="295" y="393">100</text><text x="842" y="393">100</text></g>
        <g class="thin-num" fill="#c0c0c0" text-anchor="middle"><text x="476" y="527">200</text><text x="691" y="527">200</text></g>
      </svg>
    </div>
    <div class="dyn-row d-flex align-items-center flex-shrink-0"><button class="dyn">动态输入</button></div>
    <div class="act-row d-flex align-items-center justify-content-end flex-shrink-0 song">
      <button class="act me-4">从CAD选择截面图</button><button class="act me-4">在CAD中绘制截面图</button><button class="act std me-3">确定</button><button class="act std">取消</button>
    </div>
    <div class="ed-status d-flex flex-shrink-0 gap-1 song">
      <div class="cell w-pos">坐标 (X: 38 Y: 275)</div><div class="cell w-pos">命令：无</div><div class="cell flex-fill">绘图结束</div>
    </div>
  </section>

  <section class="dlg" role="dialog" aria-label="定义网格">
    <div class="dlg-title d-flex align-items-center justify-content-between"><span>定义网格</span><button class="plain" aria-label="关闭"><svg width="12" height="12" stroke="#000"><path d="M1 1l10 10M11 1L1 11"/></svg></button></div>
    <div class="dlg-body song">
      <fieldset><legend><label for="hgap">水平方向间距(mm)=&gt;间距*个数,间距,间距*个数,间距,...</label></legend><textarea id="hgap" spellcheck="false">200,200</textarea></fieldset>
      <fieldset><legend><label for="vgap">垂直方向间距(mm)=&gt;间距*个数,间距,间距*个数,间距,...</label></legend><textarea id="vgap" spellcheck="false">100*1</textarea></fieldset>
      <div class="d-flex justify-content-end gap-3 pt-1"><button class="act std">确定</button><button class="act std">取消</button></div>
    </div>
    <svg class="ring ring-b" width="194" height="182"><ellipse cx="97" cy="90" rx="94" ry="88" fill="none" stroke="#f00" stroke-width="3"/></svg>
  </section>
  <svg class="ring ring-a" width="134" height="56"><ellipse cx="67" cy="28" rx="63" ry="25" fill="none" stroke="#f00" stroke-width="3"/></svg>

  <div class="ime">
    <div class="ime-bar d-flex align-items-center justify-content-between">
      <b>中</b>
      <svg width="14" height="14" fill="none" stroke="#1e70c8" stroke-width="1.500"><circle cx="3" cy="4" r="2"/><path d="M10 8q2 2-1 5" stroke-width="3"/></svg>
      <svg width="14" height="16" fill="#1e70c8"><rect x="4" y="0" width="6" height="10" rx="3"/><path d="M2 6q0 6 5 6t5-6M7 12v4M4 15h6" fill="none" stroke="#1e70c8" stroke-width="1.500"/></svg>
      <svg width="17" height="13"><path d="M1 1h15v11H1z" fill="#fff" stroke="#1e70c8" stroke-width="1.500"/><path d="M3 4h11M3 7h11M5 10h7" stroke="#1e70c8" stroke-width="1.500" stroke-dasharray="2 1"/></svg>
      <svg width="17" height="16" fill="#b3c0d6"><circle cx="7" cy="4" r="3"/><path d="M1 13q0-5 5-5h6v2H7v4H1z"/><text x="7" y="15" font-size="8">16</text></svg>
      <svg width="15" height="15" fill="#1e70c8"><path d="M4 1h2q2 2 3 0h2l4 3-2 3-2-1v8H4V6L2 7 0 4z"/></svg>
      <svg width="16" height="16"><path d="M2 14l7-7" stroke="#1e70c8" stroke-width="3"/><path d="M15 4l-3 2-2-2 2-3q-5-1-5 4 1 5 5 4 3-1 3-5z" fill="#1e70c8"/></svg>
    </div>
    <svg class="ime-s" width="28" height="28"><use href="#i-s"/></svg>
  </div>
  <div class="ball">69</div>
</div>

<script src="https://cdn.jsdelivr.net/npm/bootstrap@5.3.0/dist/js/bootstrap.bundle.min.js"></script>
<script>
const groups = [
  ['梁', 1, [['beam','梁(L)'],['ringbeam','圈梁(E)']]],
  ['板', 1, [['slab','现浇板(B)'],['spiral','螺旋板(B)'],['cap','柱帽(V)'],['hole','板洞(N)'],['rebar','板受力筋(S)'],['rebar2','板负筋(F)'],['strip','楼层板带(H)']]],
  ['基础', 1, [['fbeam','基础梁(F)'],['raft','筏板基础(M)'],['pit','集水坑(K)'],['pier','柱墩(Y)'],['rc','筏板主筋(R)'],['rebar2','筏板负筋(X)'],['iso','独立基础(P)'],['stripf','条形基础(T)'],['pcap','桩承台(V)'],['fbeam','承台梁(F)'],['pile','桩(U)'],['strip','基础板带(W)']]],
  ['其它', 0, []],
  ['自定义', 1, [['pt','自定义点'],['line','自定义线(X)'],['hatch','自定义面'],['dim','尺寸标注(W)']]]
];
let html = '';
groups.forEach(([name, open, kids], g) => {
  const chev = open ? 'M6 6l4 4 4-4' : 'M8 4l4 4-4 4';
  html += `<div class="tree-row d-flex align-items-center"><svg width="22" height="16" fill="none"><path d="${chev}" stroke="${open ? '#444' : '#999'}" stroke-width="2"/><path d="M18 8.500h4" stroke="#777" stroke-dasharray="1 1"/></svg><svg class="ic"><use href="#i-folder${open ? '' : 'c'}"/></svg><span class="ms-1 nowrap">${name}</span></div>`;
  kids.forEach(([icon, text], k) => {
    const end = k === kids.length - 1 ? 8 : 16;
    const trunk = g < groups.length - 1 ? 'M10.500 0v16' : '';
    const pick = icon === 'line';
    html += `<div class="tree-row d-flex align-items-center"><svg width="41" height="16" fill="none" stroke="#777" stroke-dasharray="1 1"><path d="${trunk}M29.500 0v${end}M30 8.500h10"/></svg><span class="d-flex align-items-center gap-1${pick ? ' pick' : ''}"><svg class="ic"><use href="#i-${icon}"/></svg><span class="nowrap">${text}</span></span>` +
      (pick ? '<svg width="40" height="16"><path d="M1.500 1.500h13v13h-13z" fill="#e8f3ff" stroke="#345"/><path d="M4 4h3v8H4zM9 4h3v8H9z" fill="#fff" stroke="#2a7fd4"/><path d="M16 1h22v8H16z" fill="#ffd400"/><path d="M18.500 8V3l4 5V3M29 3.500h-4v4h4M25 5.500h3M31 3l1 4.500 2-4 2 4 1-5" fill="none" stroke="#111"/></svg>' : '') + '</div>';
  });
});
document.getElementById('tree').innerHTML = html;

const count = 34;
document.getElementById('parts').innerHTML = Array.from({length: count}, (_, i) =>
  `<div class="part-row d-flex${i === count - 1 ? ' on' : ''}"><svg width="10" height="16" stroke="#777" stroke-dasharray="1 1" fill="none"><path d="M.5 0v${i === count - 1 ? 8 : 16}M1 8.500h9"/></svg><span class="pad flex-fill d-flex align-items-center"><svg width="12" height="12"><use href="#i-gear"/></svg>ZI</span></div>`).join('');

/* half-width runs take a six-pixel cell, as in the bitmap system font */
document.querySelectorAll('.song').forEach(root => {
  const walk = document.createTreeWalker(root, NodeFilter.SHOW_TEXT), found = [];
  while (walk.nextNode()) {
    const n = walk.currentNode;
    if (/[\x21-\x7e]/.test(n.data) && !n.parentNode.closest('svg,textarea,.hw')) found.push(n);
  }
  found.forEach(n => {
    const box = document.createDocumentFragment();
    n.data.split(/([\x20-\x7e]+)/).forEach(part => {
      if (!part) return;
      if (/^[\x20-\x7e]/.test(part) && part.trim()) {
        const s = document.createElement('span');
        s.className = 'hw'; s.textContent = part; s.style.whiteSpace = 'pre';
        box.append(s);
      } else box.append(part);
    });
    n.replaceWith(box);
  });
});
const first = document.getElementById('hgap');
first.focus(); first.select();
</script>
</body>
</html>
